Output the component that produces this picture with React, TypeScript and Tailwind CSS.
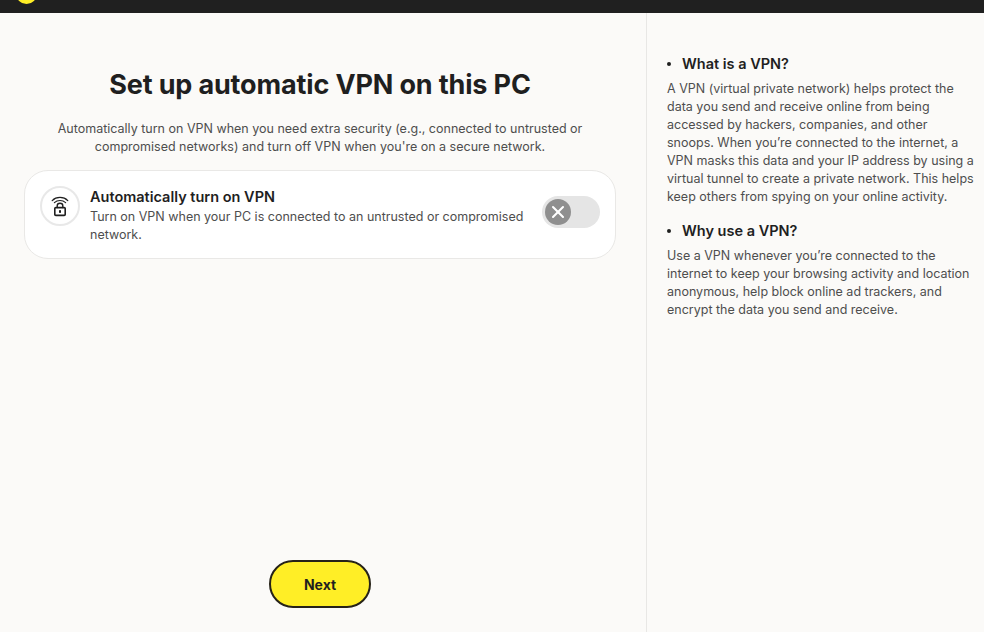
import { X } from 'lucide-react';

const sideSections = [
  {
    title: 'What is a VPN?',
    lines: [
      'A VPN (virtual private network) helps protect the',
      'data you send and receive online from being',
      'accessed by hackers, companies, and other',
      'snoops. When you’re connected to the internet, a',
      'VPN masks this data and your IP address by using a',
      'virtual tunnel to create a private network. This helps',
      'keep others from spying on your online activity.',
    ],
  },
  {
    title: 'Why use a VPN?',
    lines: [
      'Use a VPN whenever you’re connected to the',
      'internet to keep your browsing activity and location',
      'anonymous, help block online ad trackers, and',
      'encrypt the data you send and receive.',
    ],
  },
];

const WifiLockIcon = () => (
  <svg width="18" height="22" viewBox="0 0 18 22" fill="none" stroke="#1f1f1f" strokeWidth="1.2" strokeLinecap="round">
    <path d="M1.2 5.6C5.4 1.4 12.6 1.4 16.8 5.6" />
    <path d="M3.4 7.6C6.4 4.8 11.6 4.8 14.6 7.6" />
    <rect x="3.8" y="12.6" width="10.4" height="7.8" rx="1" strokeWidth="1.6" />
    <path d="M6.2 12.6V10.8C6.2 9.1 7.4 8.2 9 8.2C10.6 8.2 11.8 9.1 11.8 10.8V12.6" strokeWidth="1.4" />
    <rect x="8" y="15" width="2" height="3" rx="0.8" fill="#1f1f1f" stroke="none" />
  </svg>
);

const App = () => {
  return (
    <div className="h-[632px] w-[984px] overflow-hidden flex flex-col bg-[#fbfaf8] text-[#1f1f1f] font-['Inter',sans-serif]">
      <header className="h-[13px] shrink-0 overflow-hidden bg-[#202020] pl-[16px]">
        <div className="-mt-[17px] h-[21px] w-[21px] rounded-full border-[4px] border-[#ffee26]"></div>
      </header>

      <div className="flex flex-1 min-h-0">
        <main className="w-[647px] shrink-0 border-r border-[#e8e7e5] flex flex-col pl-6 pr-[30px]">
          <h1 className="mt-[55px] text-center text-[27px] leading-[34px] font-bold tracking-[-0.15px]">
            Set up automatic VPN on this PC
          </h1>
          <p className="mt-[18px] text-center text-[12.5px] leading-[18px] text-[#4e4e4e]">
            Automatically turn on VPN when you need extra security (e.g., connected to untrusted or
            <br />
            compromised networks) and turn off VPN when you're on a secure network.
          </p>

          <div className="mt-[14px] h-[89px] rounded-[24px] border border-[#e9e8e6] bg-white flex items-start pl-[15px] pr-[15px] pt-[15px]">
            <div className="h-10 w-10 shrink-0 rounded-full border-2 border-[#e8e8e8] flex items-center justify-center">
              <WifiLockIcon />
            </div>
            <div className="ml-[10px] flex-1">
              <div className="text-[14.5px] leading-[22px] font-semibold">Automatically turn on VPN</div>
              <div className="text-[12.5px] leading-[18px] text-[#4e4e4e] w-[440px]">
                Turn on VPN when your PC is connected to an untrusted or compromised network.
              </div>
            </div>
            <div className="mt-[10px] h-8 w-[58px] shrink-0 rounded-full bg-[#e5e5e5] flex items-center pl-[3px]">
              <div className="h-[26px] w-[26px] rounded-full bg-[#8f8f8f] flex items-center justify-center">
                <X size={20} color="#ffffff" strokeWidth={2.5} />
              </div>
            </div>
          </div>

          <div className="mt-auto mb-6 flex justify-center">
            <button className="h-12 w-[102px] rounded-full border-2 border-[#262218] bg-[#ffee26] text-[14px] font-bold">
              Next
            </button>
          </div>
        </main>

        <aside className="flex-1 pl-5 pt-[40px]">
          {sideSections.map((section) => (
            <section key={section.title} className="mb-[14px]">
              <h2 className="flex items-center text-[14.5px] leading-[22px] font-semibold">
                <span className="h-1 w-1 rounded-full bg-[#1f1f1f] mr-[11px]"></span>
                {section.title}
              </h2>
              <p className="mt-[5px] text-[12.5px] leading-[18px] text-[#4e4e4e] whitespace-nowrap">
                {section.lines.map((line) => (
                  <span key={line} className="block">{line}</span>
                ))}
              </p>
            </section>
          ))}
        </aside>
      </div>
    </div>
  );
};

export default App;
